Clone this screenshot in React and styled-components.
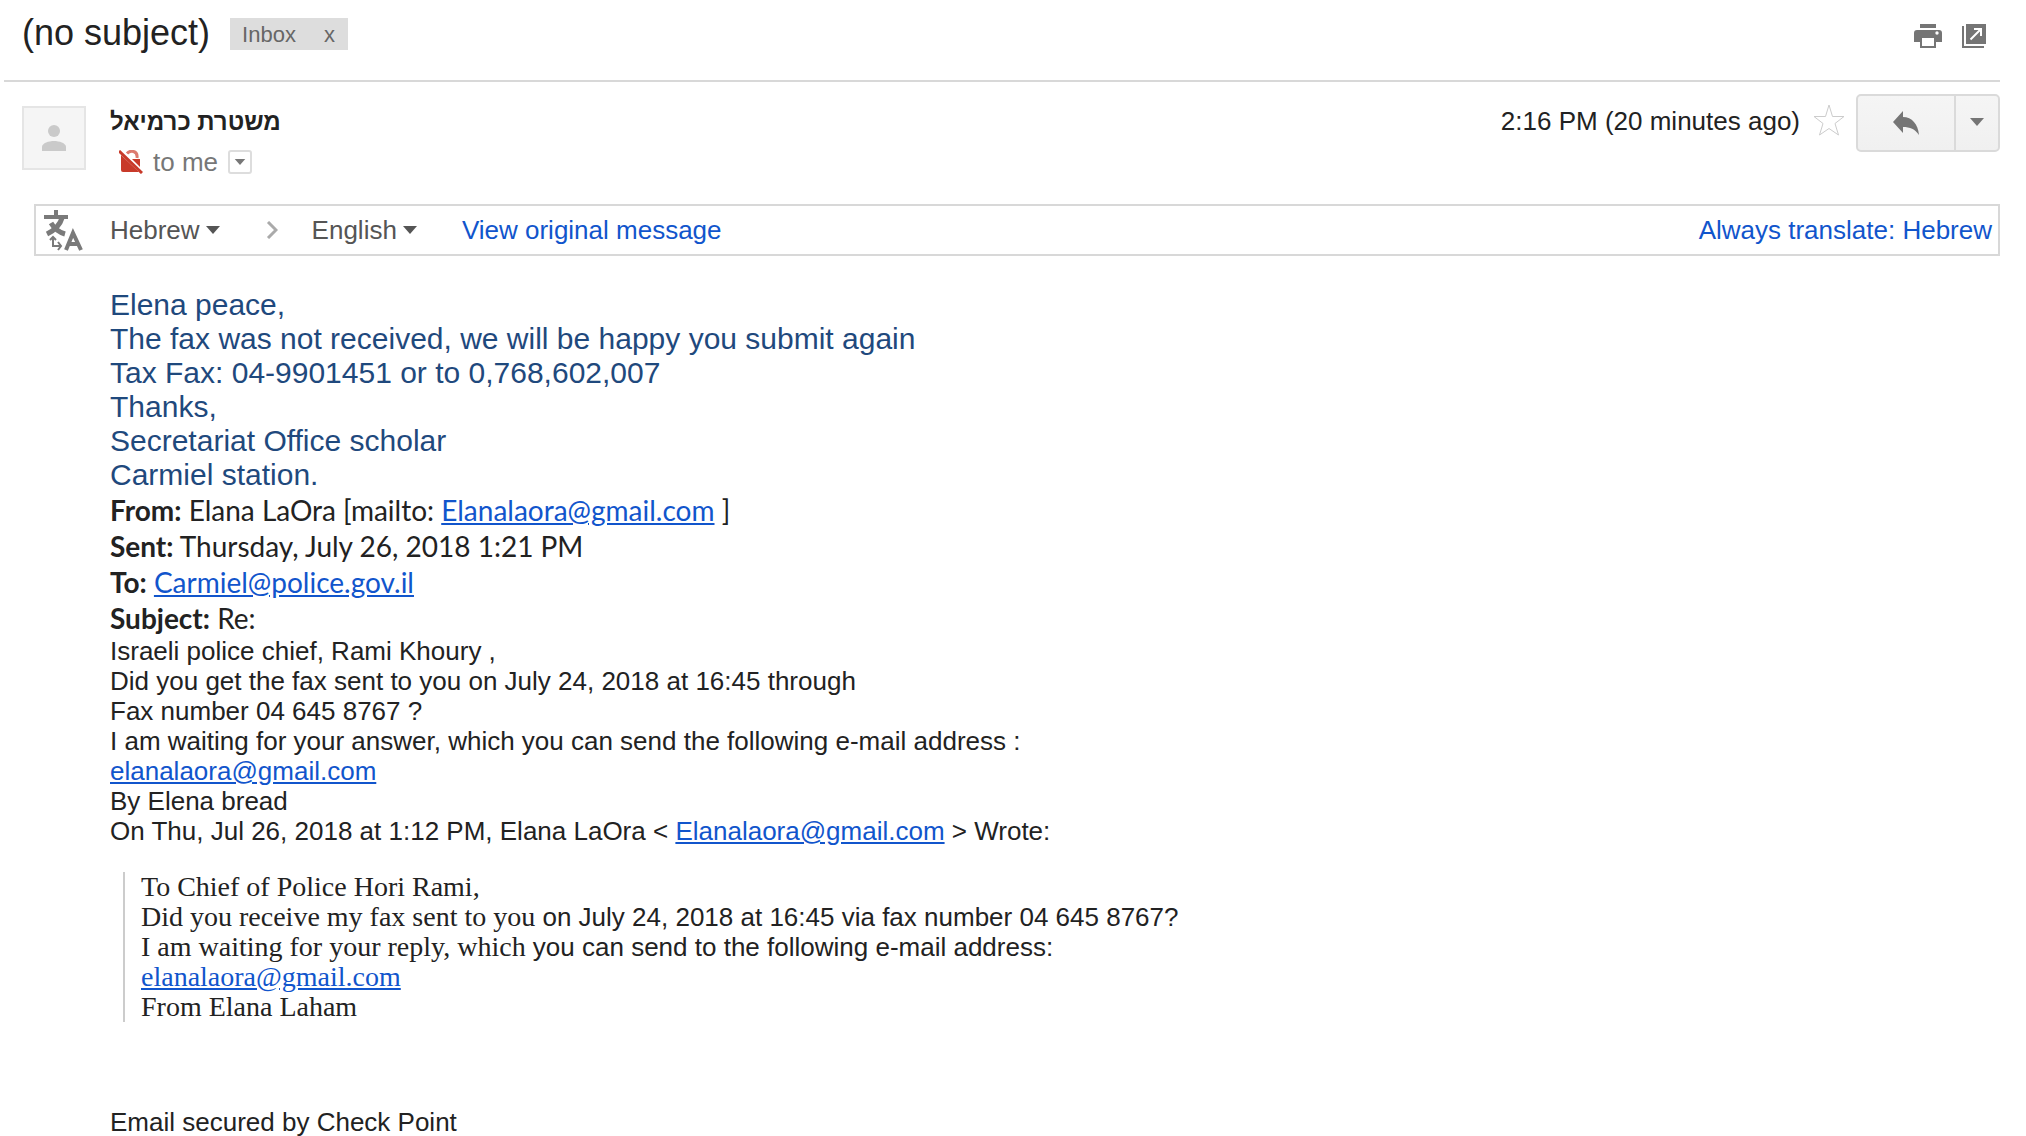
import React from "react";
import styled, { createGlobalStyle } from "styled-components";

const LANGUAGES = ["Hebrew", "English"];

const Caret = ({ width = 14, height = 8 }) => (
  <svg width={width} height={height} viewBox="0 0 14 8" aria-hidden="true">
    <path d="M0 0h14L7 8z" fill="currentColor" />
  </svg>
);

const LanguagePicker = ({ label, value }) => (
  <Picker>
    <select aria-label={label} defaultValue={value}>
      {LANGUAGES.map((language) => (
        <option key={language}>{language}</option>
      ))}
    </select>
    <Caret />
  </Picker>
);

const MailLink = ({ children }) => (
  <Address href={`mailto:${children}`}>{children}</Address>
);

const SubjectBar = () => (
  <TopBar>
    <Subject>(no subject)</Subject>
    <Chip>
      <span>Inbox</span>
      <ChipButton aria-label="Remove label Inbox">x</ChipButton>
    </Chip>
    <Tools>
      <IconButton aria-label="Print all">
        <svg width="28" height="24" viewBox="0 0 28 24">
          <path d="M6 0h16v4H6z" fill="#757575" />
          <path
            fill="#757575"
            fillRule="evenodd"
            d="M3 6h22a3 3 0 0 1 3 3v9h-6v6H6v-6H0V9a3 3 0 0 1 3-3zm5 8v8h12v-8zM23 7.300a1.700 1.700 0 1 0 0 3.400 1.700 1.700 0 0 0 0-3.400z"
          />
        </svg>
      </IconButton>
      <IconButton aria-label="In new window">
        <svg width="24" height="24" viewBox="0 0 24 24">
          <path d="M4 0h20v20H4z" fill="#757575" />
          <path d="M1 2v21h21" stroke="#757575" strokeWidth="2" fill="none" />
          <path d="M8.500 15.500L19 5M12 5h7v7" stroke="#fff" strokeWidth="2" fill="none" />
        </svg>
      </IconButton>
    </Tools>
  </TopBar>
);

const MessageHeader = () => (
  <Header>
    <Avatar>
      <svg width="24" height="26" viewBox="0 0 24 26" fill="#cacaca">
        <circle cx="12" cy="6" r="6" />
        <path d="M0 26v-4c0-4 7-6 12-6s12 2 12 6v4z" />
      </svg>
    </Avatar>
    <Sender>
      <SenderName dir="rtl">משטרת כרמיאל</SenderName>
      <Recipient>
        <svg width="24" height="24" viewBox="0 0 24 24" aria-label="Not encrypted">
          <path d="M8 3.500C11 0 19 0 18 8" stroke="#dc7a6f" strokeWidth="3" fill="none" />
          <path d="M13 9h8v8z" fill="#c83a2a" />
          <path d="M2 5l18 17H4q-2 0-2-2z" fill="#c83a2a" />
          <path d="M0 1l23 22" stroke="#c83a2a" strokeWidth="3" />
        </svg>
        <span>to me</span>
        <DetailsButton aria-label="Show details">
          <Caret width={12} height={6} />
        </DetailsButton>
      </Recipient>
    </Sender>
    <Time>2:16 PM (20 minutes ago)</Time>
    <IconButton aria-label="Star">
      <svg width="32" height="32" viewBox="0 0 32 32">
        <path
          d="M16 1l3.500 11.500H31L22 19.500 25.500 31 16 24.500 6.500 31 10 19.500 1 12.500h11.500z"
          fill="#fff"
          stroke="#ccc"
        />
      </svg>
    </IconButton>
    <ReplyGroup>
      <ReplyButton aria-label="Reply">
        <svg width="26" height="24" viewBox="0 0 26 24">
          <path d="M0 11L10 0v6c9 0 15 7 16 18-4-6-9-8-16-8v6z" fill="#757575" />
        </svg>
      </ReplyButton>
      <MoreButton aria-label="More">
        <Caret />
      </MoreButton>
    </ReplyGroup>
  </Header>
);

const TranslateBar = () => (
  <Translate>
    <TranslateIcon>
      <svg width="40" height="42" viewBox="0 0 40 42" fill="none" stroke="#7a7a7a">
        <path d="M13 1v7M1 8h24" strokeWidth="4" />
        <path d="M19 9C17 16 12 21 4 25M8 14c3 5 7 9 14 11" strokeWidth="5" />
        <path d="M10 29v8h8M7 31l3-3 3 3M15 33l3 4-3 4" strokeWidth="2" />
        <path d="M23 41l7-17 8 17M26 35h10" strokeWidth="4" />
      </svg>
    </TranslateIcon>
    <LanguagePicker label="Translate from" value="Hebrew" />
    <Chevron width="12" height="18" viewBox="0 0 12 18" aria-hidden="true">
      <path d="M2 1l8 8-8 8" stroke="#aaa" strokeWidth="3" fill="none" />
    </Chevron>
    <LanguagePicker label="Translate to" value="English" />
    <OriginalLink href="#original">View original message</OriginalLink>
    <AlwaysLink href="#always">Always translate: Hebrew</AlwaysLink>
  </Translate>
);

const App = () => {
  return (
    <>
      <GlobalStyle />
      <Page>
        <SubjectBar />
        <MessageHeader />
        <TranslateBar />
        <Body>
          <Reply>
            <p>Elena peace,</p>
            <p>The fax was not received, we will be happy you submit again</p>
            <p>Tax Fax: 04-9901451 or to 0,768,602,007</p>
            <p>Thanks,</p>
            <p>Secretariat Office scholar</p>
            <p>Carmiel station.</p>
          </Reply>
          <MailFields>
            <p>
              <b>From:</b> Elana LaOra [mailto: <MailLink>Elanalaora@gmail.com</MailLink> ]
            </p>
            <p>
              <b>Sent:</b> Thursday, July 26, 2018 1:21 PM
            </p>
            <p>
              <b>To:</b> <MailLink>Carmiel@police.gov.il</MailLink>
            </p>
            <p>
              <b>Subject:</b> Re:
            </p>
          </MailFields>
          <p>Israeli police chief, Rami Khoury ,</p>
          <p>Did you get the fax sent to you on July 24, 2018 at 16:45 through</p>
          <p>Fax number 04 645 8767 ?</p>
          <p>I am waiting for your answer, which you can send the following e-mail address :</p>
          <p>
            <MailLink>elanalaora@gmail.com</MailLink>
          </p>
          <p>By Elena bread</p>
          <p>
            On Thu, Jul 26, 2018 at 1:12 PM, Elana LaOra &lt;{" "}
            <MailLink>Elanalaora@gmail.com</MailLink> &gt; Wrote:
          </p>
          <Quote>
            <p>
              <Serif>To Chief of Police Hori Rami,</Serif>
            </p>
            <p>
              <Serif>Did you receive my fax sent to you</Serif> on July 24, 2018 at 16:45 via fax
              number 04 645 8767?
            </p>
            <p>
              <Serif>I am waiting for your reply, which</Serif> you can send to the following
              e-mail address:
            </p>
            <p>
              <Serif>
                <MailLink>elanalaora@gmail.com</MailLink>
              </Serif>
            </p>
            <p>
              <Serif>From Elana Laham</Serif>
            </p>
          </Quote>
          <p>Email secured by Check Point</p>
        </Body>
      </Page>
    </>
  );
};

const GlobalStyle = createGlobalStyle`
  * {
    box-sizing: border-box;
  }

  body {
    margin: 0;
    background: #fff;
    color: #222;
    font-family: "Liberation Sans", Arial, sans-serif;
    font-size: 26px;
    line-height: 30px;
  }

  h1, h2, p {
    margin: 0;
  }

  svg {
    display: block;
    flex-shrink: 0;
  }

  button, select {
    margin: 0;
    padding: 0;
    border: none;
    background: none;
    color: inherit;
    font: inherit;
    cursor: pointer;
  }
`;

const Page = styled.main`
  padding: 0 26px 0 4px;
`;

//----SUBJECT----
const TopBar = styled.header`
  display: flex;
  align-items: flex-start;
  height: 82px;
  padding: 13px 14px 0 18px;
  border-bottom: 2px solid #d8d8d8;
`;

const Subject = styled.h1`
  font-size: 36px;
  font-weight: normal;
  line-height: 40px;
`;

const Chip = styled.div`
  display: flex;
  gap: 28px;
  margin: 5px 0 0 20px;
  padding: 2px 13px 0 12px;
  background: #ddd;
  color: #666;
  font-size: 22px;
  line-height: 30px;
`;

const ChipButton = styled.button`
  line-height: 30px;
`;

const Tools = styled.div`
  display: flex;
  gap: 20px;
  margin: 11px 0 0 auto;
`;

const IconButton = styled.button`
  display: flex;
`;

//----SENDER----
const Header = styled.section`
  display: flex;
  align-items: flex-start;
  padding: 12px 0 27px 18px;
`;

const Avatar = styled.div`
  display: flex;
  align-items: center;
  justify-content: center;
  width: 64px;
  height: 64px;
  margin-top: 12px;
  border: 2px solid #e5e5e5;
  background: #f5f5f5;
`;

const Sender = styled.div`
  margin: 13px auto 0 24px;
`;

const SenderName = styled.h2`
  font-size: 24px;
  line-height: 30px;
`;

const Recipient = styled.div`
  display: flex;
  align-items: center;
  gap: 10px;
  margin-top: 10px;
  padding-left: 9px;
  color: #777;
`;

const DetailsButton = styled.button`
  display: flex;
  align-items: center;
  justify-content: center;
  width: 24px;
  height: 24px;
  border: 2px solid #ddd;
  border-radius: 3px;
`;

const Time = styled.time`
  margin: 12px 13px 0 0;

  & + button {
    margin: 10px 11px 0 0;
  }
`;

const ReplyGroup = styled.div`
  display: flex;
  height: 58px;
  border: 2px solid #dadada;
  border-radius: 5px;
  background: linear-gradient(#f5f5f5, #f0f0f0);
`;

const ReplyButton = styled.button`
  display: flex;
  align-items: center;
  justify-content: center;
  width: 96px;
  color: #757575;
`;

const MoreButton = styled(ReplyButton)`
  width: 44px;
  padding-bottom: 3px;
  border-left: 2px solid #dadada;
`;

//----TRANSLATE----
const Translate = styled.section`
  display: flex;
  align-items: center;
  height: 52px;
  margin-left: 30px;
  padding: 0 6px 0 7px;
  border: 2px solid #d8d8d8;
`;

const TranslateIcon = styled.div`
  width: 67px;
`;

const Picker = styled.span`
  display: flex;
  align-items: center;
  gap: 6px;
  color: #555;

  select {
    appearance: none;
    field-sizing: content;
  }
`;

const Chevron = styled.svg`
  margin: 0 34px 0 46px;
`;

const BarLink = styled.a`
  color: #15c;
  text-decoration: none;
`;

const OriginalLink = styled(BarLink)`
  margin-left: 45px;
`;

const AlwaysLink = styled(BarLink)`
  margin-left: auto;
`;

//----MESSAGE----
const Body = styled.article`
  padding: 32px 0 0 106px;
`;

const Reply = styled.div`
  color: #1f497d;
  font-size: 30px;
  line-height: 34px;
`;

const MailFields = styled.div`
  font-family: Lato, sans-serif;
  font-size: 28px;
  line-height: 36px;
`;

const Quote = styled.blockquote`
  margin: 26px 0 85px 13px;
  padding-left: 16px;
  border-left: 2px solid #ccc;
`;

const Serif = styled.span`
  font-family: "Liberation Serif", serif;
  font-size: 28px;
  line-height: 1;
`;

const Address = styled.a`
  color: #15c;
`;

export default App;
